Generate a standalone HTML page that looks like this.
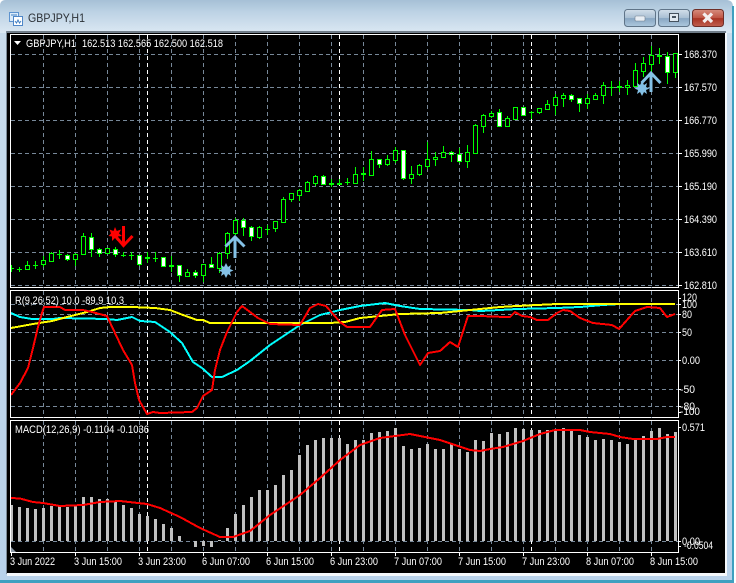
<!DOCTYPE html>
<html>
<head>
<meta charset="utf-8">
<title>GBPJPY,H1</title>
<style>
html,body{margin:0;padding:0;background:#fff;width:736px;height:583px;overflow:hidden}
svg{display:block}
text{font-family:"Liberation Sans",sans-serif;font-size:11px;fill:#fff}
</style>
</head>
<body>
<svg width="736" height="583" viewBox="0 0 736 583" xmlns="http://www.w3.org/2000/svg">
<defs>
<linearGradient id="tb" x1="0" y1="0" x2="0" y2="1"><stop offset="0" stop-color="#a6c0d6"/><stop offset=".35" stop-color="#bcd2e4"/><stop offset="1" stop-color="#dbe8f3"/></linearGradient>
<linearGradient id="lf" x1="0" y1="0" x2="0" y2="1"><stop offset="0" stop-color="#c9dcec"/><stop offset="1" stop-color="#b8d2eb"/></linearGradient>
<linearGradient id="gl" x1="0" y1="0" x2="0" y2="1"><stop offset="0" stop-color="#d3dfea"/><stop offset=".5" stop-color="#a9bfd3"/><stop offset=".52" stop-color="#88a6c2"/><stop offset="1" stop-color="#adc8de"/></linearGradient>
<linearGradient id="rd" x1="0" y1="0" x2="0" y2="1"><stop offset="0" stop-color="#d68d7e"/><stop offset=".5" stop-color="#bf5443"/><stop offset=".52" stop-color="#a83222"/><stop offset="1" stop-color="#c06050"/></linearGradient>
<clipPath id="c1"><rect x="11" y="35" width="667" height="253"/></clipPath>
<clipPath id="c2"><rect x="11" y="291" width="667" height="127"/></clipPath>
<clipPath id="c3"><rect x="11" y="421" width="667" height="131"/></clipPath>
</defs>

<!-- window frame -->
<path d="M6 0H726Q733 0 733 7V581H0V6Q0 0 6 0Z" fill="url(#lf)"/>
<path d="M6 0H726Q733 0 733 7V33H0V6Q0 0 6 0Z" fill="url(#tb)"/>
<rect x="732" y="6" width="2" height="576" fill="#3fa0c0"/>
<rect x="0" y="580" width="734" height="3" fill="#3fa0c0"/>
<rect x="6" y="31" width="720" height="2" fill="#6f7c88"/>
<rect x="6" y="31" width="1" height="543" fill="#7b8a98"/>
<rect x="7" y="33" width="718" height="540" fill="#000"/>
<rect x="725" y="33" width="2" height="543" fill="#f4f8fc"/>
<rect x="7" y="573" width="720" height="3" fill="#f4f8fc"/>

<!-- title -->
<g>
<rect x="9.500" y="12.500" width="9" height="9" fill="#dcecfa" stroke="#5d93cf"/>
<rect x="13.500" y="16.500" width="9" height="9" fill="#fff" stroke="#4f87c8"/>
<path d="M11 15h6M15 21l1.500 2 1.500-3 1.500 3 1.500-2" fill="none" stroke="#3f7fc4"/>
</g>
<text x="28" y="22" style="font-size:12px;fill:#2b3036" textLength="57" lengthAdjust="spacingAndGlyphs">GBPJPY,H1</text>

<!-- buttons -->
<rect x="624.500" y="9.500" width="31" height="17" rx="3" fill="url(#gl)" stroke="#5f7488"/>
<rect x="635" y="16" width="10" height="5" rx="1" fill="#e8eef4" stroke="#6f7f8e" stroke-width=".6"/>
<rect x="658.500" y="9.500" width="31" height="17" rx="3" fill="url(#gl)" stroke="#5f7488"/>
<rect x="669.500" y="13.500" width="9" height="8" fill="#dfe8f0" stroke="#45525e" stroke-width="1"/>
<rect x="672" y="16" width="4" height="2" fill="#45525e"/>
<rect x="692.500" y="9.500" width="31" height="17" rx="3" fill="url(#rd)" stroke="#6e2e28"/>
<path d="M703.500 13.500L712 22M712 13.500L703.500 22" stroke="#f3eeee" stroke-width="3.200" fill="none"/>

<!-- pane borders -->
<g fill="none" stroke="#fff" stroke-width="1" shape-rendering="crispEdges">
<rect x="10.500" y="34.500" width="668" height="253"/>
<rect x="10.500" y="290.500" width="668" height="127"/>
<rect x="10.500" y="420.500" width="668" height="132"/>
</g>

<!-- grid -->
<g shape-rendering="crispEdges" fill="none" stroke="#778899" stroke-dasharray="4 3">
<path clip-path="url(#c1)" d="M11 54.500H678M11 87.500H678M11 120.500H678M11 153.500H678M11 186.500H678M11 219.500H678M11 252.500H678M11 285.500H678"/>
<path clip-path="url(#c2)" d="M11 304.500H678M11 314.500H678M11 332.500H678M11 360.500H678M11 389.500H678M11 406.500H678"/>
<path clip-path="url(#c3)" d="M11 541.500H678"/>
<path d="M43.500 35V288M75.500 35V288M107.500 35V288M139.500 35V288M171.500 35V288M203.500 35V288M235.500 35V288M267.500 35V288M299.500 35V288M331.500 35V288M363.500 35V288M395.500 35V288M427.500 35V288M459.500 35V288M491.500 35V288M523.500 35V288M555.500 35V288M587.500 35V288M619.500 35V288M651.500 35V288"/>
<path d="M43.500 291V418M75.500 291V418M107.500 291V418M139.500 291V418M171.500 291V418M203.500 291V418M235.500 291V418M267.500 291V418M299.500 291V418M331.500 291V418M363.500 291V418M395.500 291V418M427.500 291V418M459.500 291V418M491.500 291V418M523.500 291V418M555.500 291V418M587.500 291V418M619.500 291V418M651.500 291V418"/>
<path d="M43.500 421V552M75.500 421V552M107.500 421V552M139.500 421V552M171.500 421V552M203.500 421V552M235.500 421V552M267.500 421V552M299.500 421V552M331.500 421V552M363.500 421V552M395.500 421V552M427.500 421V552M459.500 421V552M491.500 421V552M523.500 421V552M555.500 421V552M587.500 421V552M619.500 421V552M651.500 421V552"/>
</g>
<g shape-rendering="crispEdges" fill="none" stroke="#fff" stroke-dasharray="4 3">
<path d="M147.500 35V288M339.500 35V288M531.500 35V288M147.500 291V418M339.500 291V418M531.500 291V418M147.500 421V552M339.500 421V552M531.500 421V552"/>
</g>

<!-- candles -->
<g shape-rendering="crispEdges" clip-path="url(#c1)">
<path fill="none" stroke="#00ff00" d="M11.500 265V272M19.500 267V272M27.500 261V270M35.500 261V269M43.500 256V267M51.500 252V262M59.500 250V259M67.500 254V261M75.500 253V266M83.500 233V255M91.500 233V257M99.500 248V257M107.500 248V254M115.500 247V257M123.500 252V257M131.500 252V260M139.500 255V266M147.500 252V263M155.500 252V262M163.500 257V266M171.500 256V272M179.500 265V282M187.500 269V277M195.500 270V278M203.500 264V282M211.500 257V268M219.500 252V273M227.500 232V259M235.500 218V235M243.500 218V236M251.500 226V241M259.500 226V239M267.500 225V235M275.500 221V232M283.500 197V223M291.500 193V202M299.500 189V201M307.500 181V192M315.500 175V186M323.500 175V184M331.500 179V187M339.500 179V185M347.500 178V185M355.500 167V183M363.500 167V181M371.500 151V175M379.500 159V168M387.500 155V166M395.500 147V163M403.500 150V180M411.500 166V184M419.500 164V176M427.500 142V169M435.500 152V166M443.500 146V157M451.500 151V162M459.500 148V163M467.500 145V168M475.500 124V154M483.500 114V133M491.500 111V118M499.500 109V127M507.500 116V127M515.500 107V119M523.500 107V115M531.500 111V119M539.500 108V114M547.500 100V109M555.500 94V115M563.500 93V107M571.500 94V102M579.500 98V112M587.500 94V109M595.500 93V100M603.500 82V104M611.500 81V96M619.500 81V92M627.500 80V95M635.500 63V86M643.500 57V77M651.500 46V72M659.500 48V64M667.500 52V84M675.500 53V78"/>
<path fill="none" stroke="#00ff00" d="M9 268.500h5M17 269.500h5M33 265.500h5M57 254.500h5M121 255.500h5M129 255.500h5M145 258.500h5M153 258.500h5M169 266.500h5M265 229.500h5M329 184.500h5M337 184.500h5M345 182.500h5M361 174.500h5M529 112.500h5M609 87.500h5"/>
<path fill="none" stroke="#00ff00" stroke-width="2" d="M617 87h5M657 56h5M145 258h5M169 266h5M329 184h5M337 184h5M361 174h5"/>
<path fill="#000" stroke="#00ff00" d="M25.500 265.500h4v4h-4zM41.500 260.500h4v4h-4zM49.500 253.500h4v8h-4zM73.500 254.500h4v5h-4zM81.500 236.500h4v18h-4zM105.500 248.500h4v5h-4zM185.500 272.500h4v4h-4zM201.500 264.500h4v11h-4zM217.500 253.500h4v15h-4zM225.500 233.500h4v20h-4zM233.500 220.500h4v13h-4zM257.500 227.500h4v10h-4zM273.500 221.500h4v7h-4zM281.500 199.500h4v23h-4zM289.500 193.500h4v6h-4zM297.500 190.500h4v5h-4zM305.500 182.500h4v9h-4zM313.500 176.500h4v7h-4zM353.500 174.500h4v9h-4zM369.500 159.500h4v16h-4zM385.500 159.500h4v5h-4zM393.500 150.500h4v10h-4zM409.500 174.500h4v4h-4zM417.500 165.500h4v9h-4zM425.500 159.500h4v7h-4zM433.500 157.500h4v2h-4zM441.500 152.500h4v5h-4zM465.500 152.500h4v9h-4zM473.500 125.500h4v28h-4zM481.500 115.500h4v11h-4zM489.500 113.500h4v3h-4zM505.500 118.500h4v8h-4zM513.500 107.500h4v12h-4zM537.500 108.500h4v4h-4zM545.500 104.500h4v5h-4zM553.500 97.500h4v8h-4zM561.500 95.500h4v3h-4zM585.500 98.500h4v5h-4zM593.500 95.500h4v4h-4zM601.500 85.500h4v10h-4zM625.500 85.500h4v2h-4zM633.500 70.500h4v16h-4zM641.500 63.500h4v8h-4zM649.500 55.500h4v9h-4zM673.500 53.500h4v19h-4z"/>
<path fill="#fff" stroke="#00ff00" d="M65.500 255.500h4v4h-4zM89.500 237.500h4v12h-4zM97.500 249.500h4v4h-4zM113.500 249.500h4v5h-4zM137.500 255.500h4v9h-4zM161.500 257.500h4v9h-4zM177.500 265.500h4v10h-4zM193.500 272.500h4v3h-4zM209.500 264.500h4v3h-4zM241.500 220.500h4v7h-4zM249.500 227.500h4v9h-4zM321.500 176.500h4v8h-4zM377.500 159.500h4v5h-4zM401.500 150.500h4v28h-4zM449.500 152.500h4v2h-4zM457.500 154.500h4v7h-4zM497.500 112.500h4v14h-4zM521.500 107.500h4v8h-4zM569.500 95.500h4v4h-4zM577.500 98.500h4v5h-4zM665.500 56.500h4v16h-4z"/>
</g>

<!-- signals -->
<polygon fill="#ff0000" points="115,227 116.800,231 121,229.500 119,233.500 122,236 118,236.500 117.500,241 115,238 112,241 112,236.500 108.500,236 111,233.500 109.500,229.500 113.500,231"/>
<path d="M123.500 226V245M117 238L123.500 245.500L132.500 236" fill="none" stroke="#ff0000" stroke-width="3"/>
<g fill="none">
<path d="M225.500 246.500L235 237L244.500 246.500" stroke="#84c1e6" stroke-width="3"/>
<path d="M235 238V258" stroke="#84c1e6" stroke-width="3"/>
</g>
<polygon fill="#84c1e6" points="226,263 228,267 231,265 230,269 233.500,270.500 230,272 231,276 228,274 226,278 224,274 221,276 222,272 218.500,270.500 222,269 221,265 224,267"/>
<g fill="none" stroke="#84c1e6" stroke-width="3">
<path d="M641.500 83L651 73L660.500 83"/>
<path d="M651 74V92"/>
</g>
<polygon fill="#84c1e6" points="642,81 644,85 647,83 646,87 649.500,88.500 646,90 647,94 644,92 642,96 640,92 637,94 638,90 634.500,88.500 638,87 637,83 640,85"/>

<!-- indicator 1 -->
<g clip-path="url(#c2)" fill="none" stroke-width="2" stroke-linejoin="round" shape-rendering="crispEdges">
<polyline stroke="#00ffff" points="11,313 20,317 32,319 53,319 60,318 107,319 117,320 132,317 140,321 155,322 170,332 182,343 193,362 202,368 212,377 222,377 237,370 250,361 270,345 300,325 320,315 340,310 360,306 385,303 400,306 420,309 470,310 480,311 500,310 517,309 557,308 580,307 603,305 620,304 675,304"/>
<polyline stroke="#ffff00" points="11,328 33,324 52,321 67,317 87,312 100,308 110,307 132,307 155,308 170,310 183,315 197,320 203,320 210,323 330,323 345,322 360,318 400,314 440,313 480,309 500,307 517,306 557,304 675,304"/>
<polyline stroke="#ff0000" points="11,395 20,383 28,368 33,348 38,327 42,313 44,307 60,307 65,310 83,310 92,312 107,316 115,333 123,350 132,365 135,383 139,400 147,414 153,412 160,413 192,412 197,408 203,396 212,390 215,370 220,350 227,332 237,312 242,306 250,312 258,318 270,324 300,325 310,308 318,304 326,306 340,322 347,327 370,327 382,310 395,309 405,335 420,365 428,353 440,351 450,342 458,347 468,316 480,316 505,317 510,317 515,312 522,316 530,317 537,320 548,320 557,313 563,310 570,311 580,318 593,323 612,325 619,329 627,320 635,311 647,307 660,308 667,317 675,314"/>
</g>

<!-- MACD bars -->
<g clip-path="url(#c3)" shape-rendering="crispEdges">
<path stroke="#c0c0c0" stroke-width="3" fill="none" d="M11.500 505V541M19.500 507V541M27.500 508V541M35.500 509V541M43.500 508V541M51.500 506V541M59.500 506V541M67.500 507V541M75.500 505V541M83.500 497V541M91.500 497V541M99.500 499V541M107.500 499V541M115.500 502V541M123.500 505V541M131.500 508V541M139.500 514V541M147.500 516V541M155.500 519V541M163.500 524V541M171.500 528V541M179.500 536V541M195.500 541V547M203.500 541V546M211.500 541V547M219.500 540V541M227.500 528V541M235.500 514V541M243.500 505V541M251.500 497V541M259.500 490V541M267.500 490V541M275.500 485V541M283.500 475V541M291.500 470V541M299.500 455V541M307.500 445V541M315.500 440V541M323.500 438V541M331.500 438V541M339.500 438V541M347.500 444V541M355.500 440V541M363.500 440V541M371.500 433V541M379.500 432V541M387.500 431V541M395.500 428V541M403.500 446V541M411.500 449V541M419.500 448V541M427.500 444V541M435.500 449V541M443.500 449V541M451.500 443V541M459.500 449V541M467.500 452V541M475.500 440V541M483.500 441V541M491.500 433V541M499.500 434V541M507.500 432V541M515.500 428V541M523.500 429V541M531.500 430V541M539.500 430V541M547.500 430V541M555.500 429V541M563.500 428V541M571.500 430V541M579.500 435V541M587.500 437V541M595.500 440V541M603.500 439V541M611.500 440V541M619.500 442V541M627.500 444V541M635.500 440V541M643.500 436V541M651.500 431V541M659.500 428V541M667.500 434V541M675.500 432V541"/>
</g>
<polygon fill="#8a97a5" points="11,547 16,552 11,552"/>
<polyline clip-path="url(#c3)" shape-rendering="crispEdges" fill="none" stroke="#ff0000" stroke-width="2" points="11,498 20,498.500 33,502 43,503 60,506 83,505 100,502 120,501 147,504 160,508 180,517 200,528 220,537 233,537 250,531 270,515 300,495 320,478 340,460 360,445 380,438 410,434 440,440 470,450 480,451 490,449 503,447 523,441 540,434 555,430 580,430 590,432 610,434 620,437 633,439 657,439 667,437 675,437"/>

<!-- axis ticks -->
<path shape-rendering="crispEdges" stroke="#fff" fill="none" d="M678 54.500h4M678 87.500h4M678 120.500h4M678 153.500h4M678 186.500h4M678 219.500h4M678 252.500h4M678 285.500h4M678 298.500h3M678 304.500h3M678 314.500h3M678 332.500h3M678 360.500h3M678 389.500h3M678 406.500h3M678 412.500h3M678 427.500h3M678 541.500h3M678 546.500h3M11.500 552v4M75.500 552v4M139.500 552v4M203.500 552v4M267.500 552v4M331.500 552v4M395.500 552v4M459.500 552v4M523.500 552v4M587.500 552v4M651.500 552v4"/>

<!-- header text -->
<polygon fill="#fff" points="14,41 21,41 17.500,45"/>
<text x="26" y="47" textLength="50" lengthAdjust="spacingAndGlyphs">GBPJPY,H1</text>
<text x="82" y="47" textLength="141" lengthAdjust="spacingAndGlyphs">162.513 162.565 162.500 162.518</text>
<text x="15" y="304" textLength="109" lengthAdjust="spacingAndGlyphs">R(9,26,52) 10.0 -89.9 10.3</text>
<text x="15" y="433" textLength="134" lengthAdjust="spacingAndGlyphs">MACD(12,26,9) -0.1104 -0.1036</text>

<!-- right axis -->
<text x="684" y="58" textLength="33" lengthAdjust="spacingAndGlyphs">168.370</text>
<text x="684" y="91" textLength="33" lengthAdjust="spacingAndGlyphs">167.570</text>
<text x="684" y="124" textLength="33" lengthAdjust="spacingAndGlyphs">166.770</text>
<text x="684" y="157" textLength="33" lengthAdjust="spacingAndGlyphs">165.990</text>
<text x="684" y="190" textLength="33" lengthAdjust="spacingAndGlyphs">165.190</text>
<text x="684" y="223" textLength="33" lengthAdjust="spacingAndGlyphs">164.390</text>
<text x="684" y="256" textLength="33" lengthAdjust="spacingAndGlyphs">163.610</text>
<text x="684" y="289" textLength="33" lengthAdjust="spacingAndGlyphs">162.810</text>
<text x="682" y="301" textLength="15" lengthAdjust="spacingAndGlyphs">120</text>
<text x="682" y="308" textLength="15" lengthAdjust="spacingAndGlyphs">100</text>
<text x="682" y="318" textLength="10" lengthAdjust="spacingAndGlyphs">80</text>
<text x="682" y="336" textLength="10" lengthAdjust="spacingAndGlyphs">50</text>
<text x="682" y="364" textLength="18" lengthAdjust="spacingAndGlyphs">0.00</text>
<text x="680" y="393" textLength="15" lengthAdjust="spacingAndGlyphs">-50</text>
<text x="680" y="410" textLength="15" lengthAdjust="spacingAndGlyphs">-80</text>
<text x="680" y="415" textLength="20" lengthAdjust="spacingAndGlyphs">-100</text>
<text x="682" y="431" textLength="23" lengthAdjust="spacingAndGlyphs">0.571</text>
<text x="682" y="545" textLength="18" lengthAdjust="spacingAndGlyphs">0.00</text>
<text x="684" y="549" textLength="29" lengthAdjust="spacingAndGlyphs">-0.0504</text>

<!-- time axis -->
<text x="10" y="565" textLength="45" lengthAdjust="spacingAndGlyphs">3 Jun 2022</text>
<text x="74" y="565" textLength="48" lengthAdjust="spacingAndGlyphs">3 Jun 15:00</text>
<text x="138" y="565" textLength="48" lengthAdjust="spacingAndGlyphs">3 Jun 23:00</text>
<text x="202" y="565" textLength="48" lengthAdjust="spacingAndGlyphs">6 Jun 07:00</text>
<text x="266" y="565" textLength="48" lengthAdjust="spacingAndGlyphs">6 Jun 15:00</text>
<text x="330" y="565" textLength="48" lengthAdjust="spacingAndGlyphs">6 Jun 23:00</text>
<text x="394" y="565" textLength="48" lengthAdjust="spacingAndGlyphs">7 Jun 07:00</text>
<text x="458" y="565" textLength="48" lengthAdjust="spacingAndGlyphs">7 Jun 15:00</text>
<text x="522" y="565" textLength="48" lengthAdjust="spacingAndGlyphs">7 Jun 23:00</text>
<text x="586" y="565" textLength="48" lengthAdjust="spacingAndGlyphs">8 Jun 07:00</text>
<text x="650" y="565" textLength="48" lengthAdjust="spacingAndGlyphs">8 Jun 15:00</text>
</svg>
</body>
</html>
